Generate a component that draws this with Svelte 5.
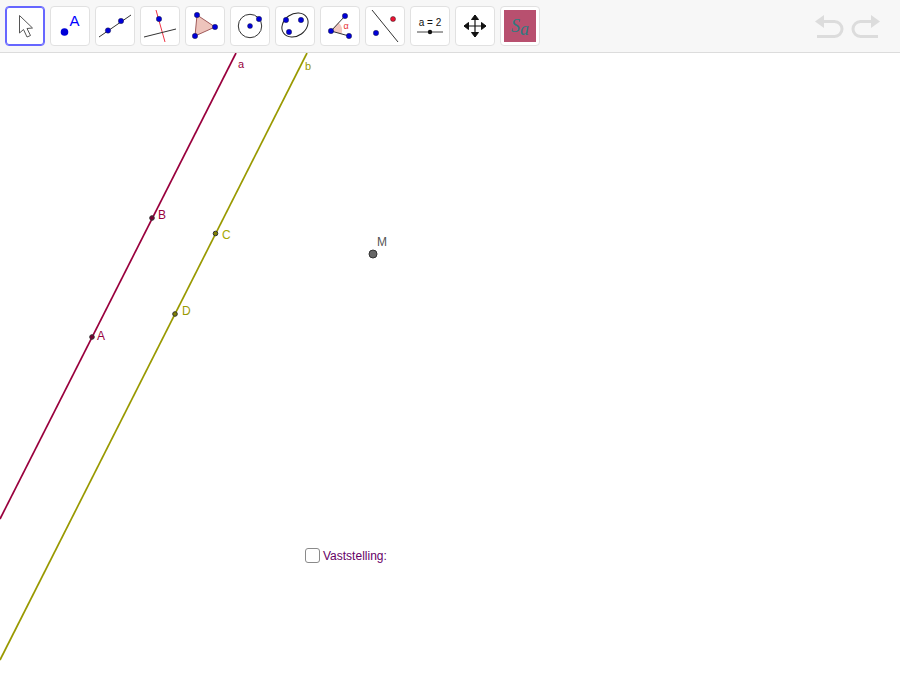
<script>
  let showResult = $state(false);
</script>

<div class="applet">
  <div class="toolbar">
    <div class="tools">
      <button class="tool active" aria-label="Move">
        <svg viewBox="1 1 38 38">
          <path d="M14.5 9.500 L14.5 27 L18.500 23.500 L22 31 L25.500 29.500 L22 22.500 L27.500 22 Z" fill="#fff" stroke="#555" stroke-width="1" />
        </svg>
      </button>
      <button class="tool" aria-label="Point">
        <svg viewBox="1 1 38 38">
          <circle cx="14.5" cy="26" r="3.8" fill="#0000d8" />
          <text x="19.5" y="20" class="icon-a">A</text>
        </svg>
      </button>
      <button class="tool" aria-label="Line">
        <svg viewBox="1 1 38 38">
          <line x1="4" y1="31" x2="36" y2="9" class="ink" />
          <circle cx="13" cy="24.5" r="2.7" class="pt" />
          <circle cx="26" cy="15" r="2.7" class="pt" />
        </svg>
      </button>
      <button class="tool" aria-label="Perpendicular">
        <svg viewBox="1 1 38 38">
          <line x1="16" y1="4" x2="25" y2="36" stroke="#ee3344" stroke-width="1" />
          <line x1="4" y1="31" x2="36" y2="23" class="ink" />
          <circle cx="19" cy="13" r="2.7" class="pt" />
        </svg>
      </button>
      <button class="tool" aria-label="Polygon">
        <svg viewBox="1 1 38 38">
          <path d="M12 9 L30 21 L10 30 Z" fill="#eec4bc" stroke="#a05a5a" stroke-width="1" />
          <circle cx="12" cy="9" r="2.7" class="pt" />
          <circle cx="30" cy="21" r="2.7" class="pt" />
          <circle cx="10" cy="30" r="2.7" class="pt" />
        </svg>
      </button>
      <button class="tool" aria-label="Circle">
        <svg viewBox="1 1 38 38">
          <circle cx="20" cy="20" r="11.7" fill="none" stroke="#333" stroke-width="1" />
          <circle cx="20" cy="20" r="2.5" class="pt" />
          <circle cx="29" cy="13" r="2.7" class="pt" />
        </svg>
      </button>
      <button class="tool" aria-label="Conic">
        <svg viewBox="1 1 38 38">
          <ellipse cx="20" cy="19" rx="14" ry="11" transform="rotate(-35 20 19)" fill="none" stroke="#222" stroke-width="1" />
          <circle cx="11" cy="14" r="2.7" class="pt" />
          <circle cx="26" cy="14" r="2.7" class="pt" />
          <circle cx="14" cy="26" r="2.7" class="pt" />
        </svg>
      </button>
      <button class="tool" aria-label="Angle">
        <svg viewBox="1 1 38 38">
          <path d="M11 25 L18.5 16.500 A11 11 0 0 1 21.5 28 Z" fill="#f2c8c0" />
          <path d="M25 10 L11 25 L29 30" fill="none" stroke="#333" stroke-width="1" />
          <circle cx="25" cy="10" r="2.7" class="pt" />
          <circle cx="11" cy="25" r="2.7" class="pt" />
          <circle cx="29" cy="30" r="2.7" class="pt" />
          <text x="23.5" y="23" class="icon-alpha">α</text>
        </svg>
      </button>
      <button class="tool" aria-label="Reflect">
        <svg viewBox="1 1 38 38">
          <line x1="7" y1="4" x2="33" y2="36" class="ink" />
          <circle cx="28" cy="13" r="2.5" fill="#ee1133" stroke="#222" stroke-width="0.5" />
          <circle cx="11" cy="27" r="2.7" class="pt" />
        </svg>
      </button>
      <button class="tool" aria-label="Slider">
        <svg viewBox="1 1 38 38">
          <text x="20" y="20" class="icon-slider">a = 2</text>
          <line x1="7" y1="26" x2="33" y2="26" stroke="#444" stroke-width="1" />
          <circle cx="20" cy="26" r="2.2" fill="#111" />
        </svg>
      </button>
      <button class="tool" aria-label="Move view">
        <svg viewBox="1 1 38 38">
          <path d="M20 9 V31 M9 20 H31" stroke="#111" stroke-width="1.2" />
          <path d="M20 9 L16.5 13.5 H23.5 Z M20 31 L16.5 26.5 H23.5 Z M9 20 L13.5 16.5 V23.5 Z M31 20 L26.5 16.5 V23.5 Z" fill="#111" stroke="#111" />
        </svg>
      </button>
      <button class="tool" aria-label="Custom tool">
        <div class="custom"><span class="s">S</span><span class="alpha">a</span></div>
      </button>
    </div>
    <div class="history">
      <svg width="30" height="24" viewBox="0 0 30 24" aria-label="Undo">
        <path d="M1 6.500 L10 0 V13 Z" fill="#dcdcdc" />
        <path d="M9 6.500 H20.500 A7.500 7.500 0 0 1 20.500 21.500 H3" fill="none" stroke="#dcdcdc" stroke-width="3" />
      </svg>
      <svg width="30" height="24" viewBox="0 0 30 24" aria-label="Redo">
        <path d="M29 6.500 L20 0 V13 Z" fill="#dcdcdc" />
        <path d="M21 6.500 H9.500 A7.500 7.500 0 0 0 9.500 21.500 H27" fill="none" stroke="#dcdcdc" stroke-width="3" />
      </svg>
    </div>
  </div>

  <div class="canvas">
    <svg class="plot" width="900" height="647" viewBox="0 53 900 647">
      <line x1="236" y1="53" x2="0" y2="519" stroke="#99003d" stroke-width="1.7" />
      <line x1="307" y1="53" x2="0" y2="660" stroke="#999900" stroke-width="1.7" />

      <text x="238" y="68" fill="#99003d" class="lbl-small">a</text>
      <text x="305" y="70" fill="#999900" class="lbl-small">b</text>

      <circle cx="92" cy="337" r="2.3" fill="#7a0032" stroke="#333" stroke-width="1" />
      <text x="97" y="340" fill="#99003d" class="lbl">A</text>
      <circle cx="152" cy="218" r="2.3" fill="#7a0032" stroke="#333" stroke-width="1" />
      <text x="158" y="219" fill="#99003d" class="lbl">B</text>

      <circle cx="215.500" cy="233.500" r="2.300" fill="#808000" stroke="#333" stroke-width="1" />
      <text x="222" y="239" fill="#a6a600" class="lbl">C</text>
      <circle cx="175" cy="314" r="2.300" fill="#808000" stroke="#333" stroke-width="1" />
      <text x="182" y="315" fill="#999900" class="lbl">D</text>

      <circle cx="373" cy="254" r="4" fill="#666" stroke="#333" stroke-width="1" />
      <text x="377" y="246" fill="#555" class="lbl">M</text>
    </svg>

    <label class="check">
      <input type="checkbox" bind:checked={showResult} />
      <span>Vaststelling:</span>
    </label>
  </div>
</div>

<style>
  :global(body) {
    background: #fff;
    font-family: "Liberation Sans", Arial, sans-serif;
  }

  .applet {
    width: 900px;
    height: 700px;
    display: flex;
    flex-direction: column;
    overflow: hidden;
  }

  .toolbar {
    height: 53px;
    box-sizing: border-box;
    flex: none;
    display: flex;
    justify-content: space-between;
    padding: 6px 19px 0 5px;
    background: #f7f7f7;
    border-bottom: 1px solid #dcdcdc;
  }

  .tools {
    display: flex;
    gap: 5px;
  }

  .tool {
    width: 40px;
    height: 40px;
    padding: 0;
    box-sizing: border-box;
    background: #fff;
    border: 1px solid #e1e1e1;
    border-radius: 4px;
  }

  .tool.active {
    border-color: #6666ff;
    box-shadow: inset 0 0 0 1px #6666ff;
  }

  .tool svg {
    display: block;
    width: 38px;
    height: 38px;
  }

  .ink {
    stroke: #333;
    stroke-width: 1;
  }

  .pt {
    fill: #0000d8;
    stroke: #222;
    stroke-width: 0.4;
  }

  .icon-a {
    font-size: 15px;
    fill: #0000ff;
  }

  .icon-alpha {
    font-size: 9px;
    fill: #e83030;
  }

  .icon-slider {
    font-size: 10px;
    fill: #111;
    text-anchor: middle;
  }

  .custom {
    width: 32px;
    height: 32px;
    margin: 3px;
    display: flex;
    align-items: center;
    justify-content: center;
    background: #b8506f;
    color: #2f7a80;
    font-family: "Liberation Serif", serif;
    font-style: italic;
    font-size: 18px;
  }

  .custom .alpha {
    margin-top: 6px;
  }

  .history {
    display: flex;
    gap: 7px;
    padding-top: 9px;
  }

  .canvas {
    position: relative;
    flex: 1;
  }

  .plot {
    display: block;
  }

  .lbl {
    font-size: 12px;
  }

  .lbl-small {
    font-size: 11px;
  }

  .check {
    position: absolute;
    left: 305px;
    top: 495px;
    display: flex;
    align-items: center;
    gap: 3px;
    font-size: 12px;
    color: #660066;
  }

  .check input {
    appearance: none;
    width: 15px;
    height: 15px;
    margin: 0;
    background: #fff;
    border: 1.5px solid #8a8a8a;
    border-radius: 3px;
  }
</style>
